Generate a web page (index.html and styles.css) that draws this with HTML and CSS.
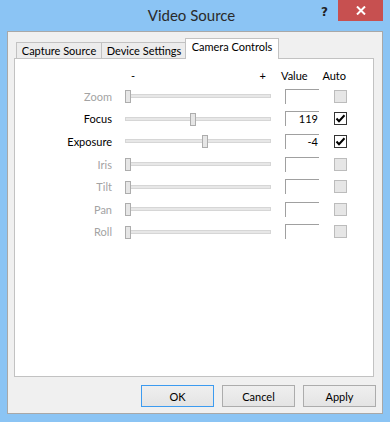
FILE: index.html
```html
<!DOCTYPE html>
<html lang="en">
<head>
    <meta charset="UTF-8">
    <meta name="viewport" content="width=device-width, initial-scale=1.0">
    <title>Video Source</title>
    <link rel="stylesheet" href="styles.css">
</head>
<body>
    <div class="window">
        <div class="titlebar">
            <span></span>
            <span class="title">Video Source</span>
            <div class="caption-btns">
                <span class="help">?</span>
                <span class="close">
                    <svg width="10" height="9" viewBox="0 0 10 9"><path d="M1 0.5 L9 8.5 M9 0.5 L1 8.5" stroke="#fff" stroke-width="2"/></svg>
                </span>
            </div>
        </div>

        <div class="client">
            <div class="tabs">
                <div class="tab">Capture Source</div>
                <div class="tab">Device Settings</div>
                <div class="tab active">Camera Controls</div>
            </div>

            <div class="panel">
                <div class="controls">
                    <span></span>
                    <div class="head-range"><span>-</span><span>+</span></div>
                    <span class="head-value">Value</span>
                    <span class="head-auto">Auto</span>

                    <span class="label off">Zoom</span>
                    <div class="track"><span class="thumb" style="left: 0px;"></span></div>
                    <span class="value off"></span>
                    <span class="check off"></span>

                    <span class="label">Focus</span>
                    <div class="track"><span class="thumb" style="left: 65px;"></span></div>
                    <span class="value">119</span>
                    <span class="check on"><svg width="11" height="11" viewBox="0 0 11 11"><path d="M1.5 5.5 L4 8.2 L9.5 2.2" fill="none" stroke="#000" stroke-width="2"/></svg></span>

                    <span class="label">Exposure</span>
                    <div class="track"><span class="thumb" style="left: 77px;"></span></div>
                    <span class="value">-4</span>
                    <span class="check on"><svg width="11" height="11" viewBox="0 0 11 11"><path d="M1.5 5.5 L4 8.2 L9.5 2.2" fill="none" stroke="#000" stroke-width="2"/></svg></span>

                    <span class="label off">Iris</span>
                    <div class="track"><span class="thumb" style="left: 0px;"></span></div>
                    <span class="value off"></span>
                    <span class="check off"></span>

                    <span class="label off">Tilt</span>
                    <div class="track"><span class="thumb" style="left: 0px;"></span></div>
                    <span class="value off"></span>
                    <span class="check off"></span>

                    <span class="label off">Pan</span>
                    <div class="track"><span class="thumb" style="left: 0px;"></span></div>
                    <span class="value off"></span>
                    <span class="check off"></span>

                    <span class="label off">Roll</span>
                    <div class="track"><span class="thumb" style="left: 0px;"></span></div>
                    <span class="value off"></span>
                    <span class="check off"></span>
                </div>
            </div>

            <div class="buttons">
                <button class="btn default">OK</button>
                <button class="btn">Cancel</button>
                <button class="btn">Apply</button>
            </div>
        </div>
    </div>
</body>
</html>
```

FILE: styles.css
```css
* {
    box-sizing: border-box;
}
body {
    margin: 0;
    font-family: Lato, "Open Sans", sans-serif;
    font-size: 11px;
    color: #000;
}
.window {
    width: 390px;
    height: 422px;
    background-color: #8bc4f4;
    display: flex;
    flex-direction: column;
}
.titlebar {
    height: 31px;
    display: grid;
    grid-template-columns: 1fr auto 1fr;
    padding-right: 7px;
}
.title {
    font-size: 15px;
    color: #2a2a2a;
    line-height: 31px;
}
.caption-btns {
    display: flex;
    justify-content: flex-end;
    align-items: flex-start;
    gap: 10px;
}
.help {
    font-family: "DejaVu Sans", sans-serif;
    font-weight: bold;
    font-size: 12px;
    color: #222;
    margin-top: 5px;
}
.close {
    width: 45px;
    height: 21px;
    background-color: #c75050;
    display: flex;
    align-items: center;
    justify-content: center;
}
.client {
    flex: 1;
    margin: 0 7px 8px;
    background-color: #f0f0f0;
    border: 1px solid #a8a8a8;
    display: flex;
    flex-direction: column;
}
.tabs {
    height: 26px;
    display: flex;
    align-items: flex-end;
    padding-left: 8px;
}
.tab {
    height: 16px;
    width: 86px;
    line-height: 16px;
    text-align: center;
    border: 1px solid #c2c2c2;
    border-bottom: none;
    background-color: #ececec;
    margin-right: -1px;
}
.tab.active {
    width: 94px;
    height: 21px;
    margin: 0 0 -1px -1px;
    background-color: #fff;
    position: relative;
    line-height: 16px;
}
.panel {
    height: 319px;
    margin-left: 6px;
    width: 360px;
    background-color: #fff;
    border: 1px solid #c2c2c2;
}
.controls {
    display: grid;
    grid-template-columns: 97px 146px 35px 13px;
    grid-template-rows: 20px;
    grid-auto-rows: 22.6px;
    column-gap: 13px;
    align-items: center;
    padding-top: 6px;
}
.controls > :nth-child(4n+3) {
    margin-left: 1px;
}
.controls > :nth-child(4n) {
    margin-left: 2px;
}
.head-range {
    display: flex;
    justify-content: space-between;
    padding: 0 5px 0 6px;
}
.head-value {
    margin-left: -3px !important;
}
.head-auto {
    justify-self: end;
    margin-right: -1px;
}
.label {
    text-align: right;
}
.off {
    color: #a3a3a3;
}
.track {
    position: relative;
    height: 4px;
    background-color: #e7e7e7;
    border: 1px solid #d6d6d6;
}
.thumb {
    position: absolute;
    top: -5px;
    margin-left: -1px;
    width: 6px;
    height: 13px;
    background-color: #e6e6e6;
    border: 1px solid #adadad;
}
.value {
    height: 15px;
    border-top: 1px solid #a0a0a0;
    border-left: 1px solid #a0a0a0;
    text-align: right;
    line-height: 14px;
    padding-right: 1px;
}
.check {
    width: 13px;
    height: 13px;
    display: flex;
    align-items: center;
    justify-content: center;
}
.check.off {
    background-color: #e6e6e6;
    border: 1px solid #bcbcbc;
}
.check.on {
    background-color: #fff;
    border: 1px solid #333;
}
.buttons {
    display: flex;
    justify-content: flex-end;
    gap: 8px;
    padding: 8px 6px 0 0;
}
.btn {
    width: 73px;
    height: 22px;
    font-family: inherit;
    font-size: 11px;
    color: #000;
    background: linear-gradient(#efefef, #e4e4e4);
    border: 1px solid #acacac;
    padding: 0;
}
.btn.default {
    border-color: #3c9bf0;
}
```
